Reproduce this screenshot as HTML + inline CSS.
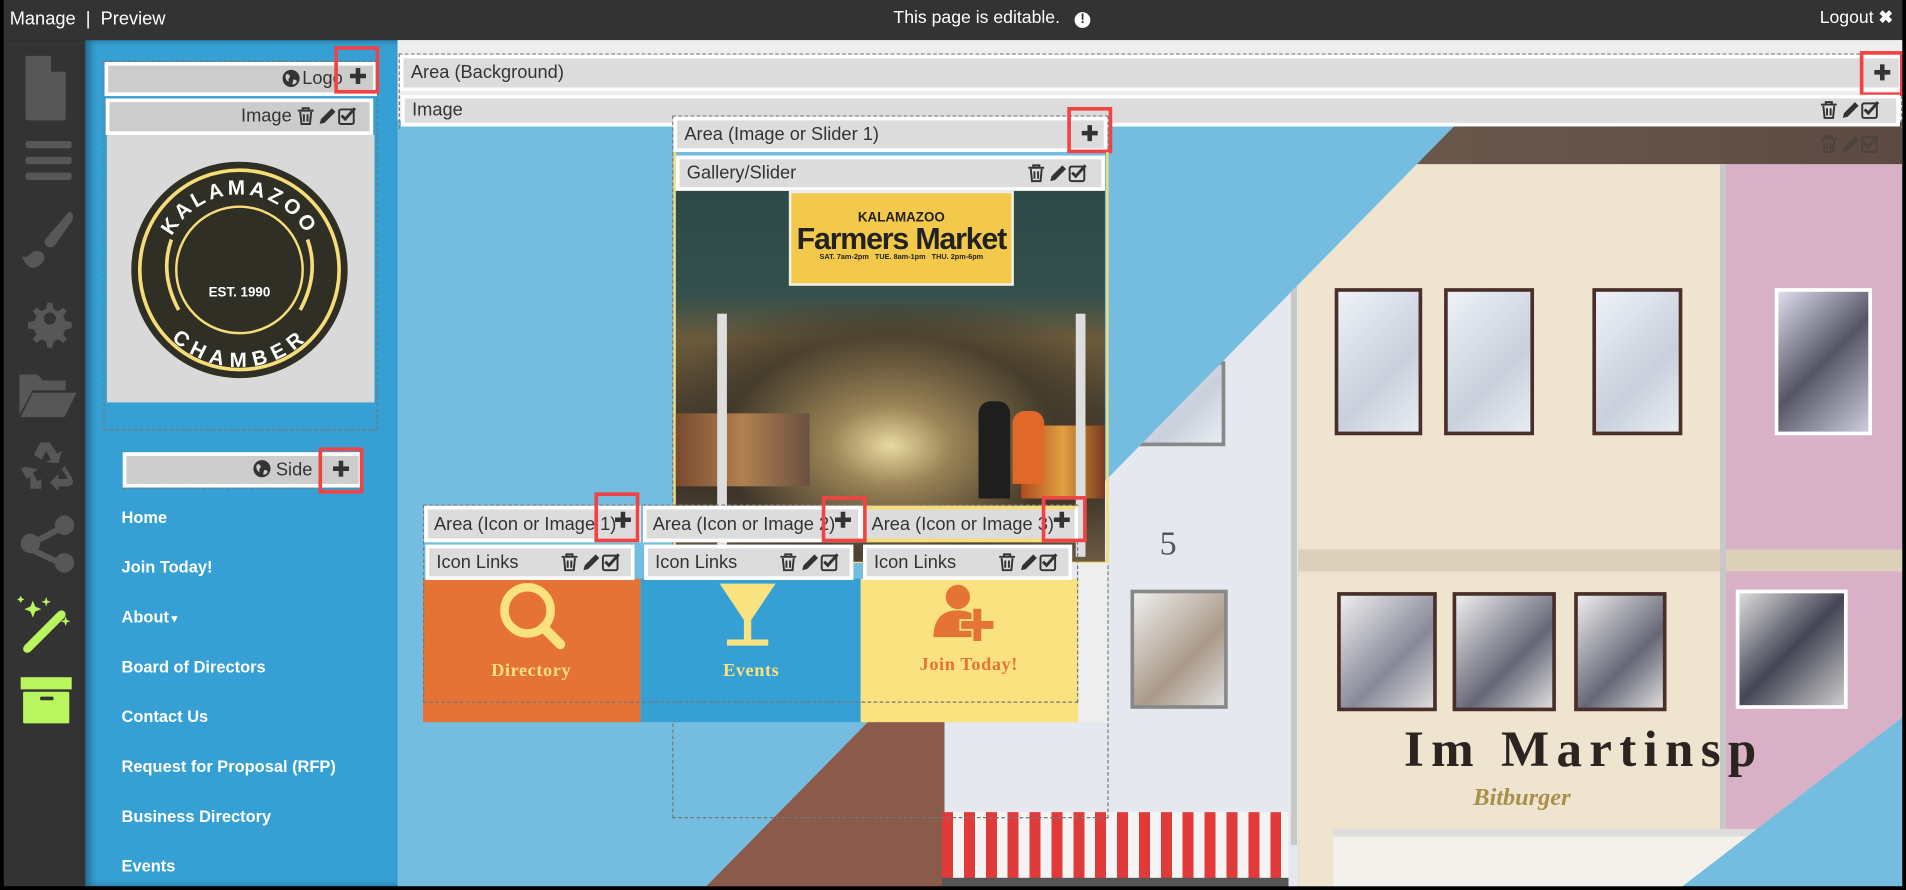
<!DOCTYPE html>
<html><head><meta charset="utf-8"><style>
*{margin:0;padding:0;box-sizing:border-box}
html,body{width:1906px;height:890px;overflow:hidden;background:#000}
#w{position:absolute;left:0;top:0;width:1568px;height:732px;transform:scale(1.21556,1.2158);transform-origin:0 0;font-family:"Liberation Sans",sans-serif;overflow:hidden;background:#000}
.a{position:absolute}
.hd{position:absolute;background:#dcdcdc;border:3px solid #fff;color:#333;font-size:15px;line-height:20px;padding:0 6px;white-space:nowrap}
.hd2{background:#ccc}
.red{position:absolute;border:3px solid #f04444}
.pl{position:absolute;width:15px;height:15px}
.tl{position:absolute;width:50px;height:17px}
.nav{position:absolute;left:100px;color:#fff;font-weight:bold;font-size:13.5px}
.dash{position:absolute;border:1px dashed #777}
.win{position:absolute;background:#4a2e2a;padding:3px}
.win i{display:block;width:100%;height:100%;background:linear-gradient(135deg,#eef2f8,#c9d0dc 60%,#e8ecf2);border:0}
</style></head><body><div id="w">
<svg width="0" height="0" style="position:absolute"><defs>
<symbol id="plus" viewBox="0 0 16 16"><path d="M6 1h4v5h5v4h-5v5H6v-5H1V6h5z" fill="#333"/></symbol>
<symbol id="tools" viewBox="0 0 50 17"><g fill="none" stroke="#333" stroke-width="1.6"><path d="M1 4h13M5 4V2h5v2M3 5l1 10h7l1-10M6 7v6M9 7v6"/><rect x="35" y="3" width="12" height="12" rx="1.5"/></g><path d="M19 15l1-4 9-9 3 3-9 9z" fill="#333"/><path d="M37 8l3 3 8-9" fill="none" stroke="#333" stroke-width="2.4"/></symbol>
<symbol id="globe" viewBox="0 0 16 16"><circle cx="8" cy="8" r="7.5" fill="#333"/><path d="M4 4q3 0 3 3q-2 1-1 4q-3-1-3-5zM10 9q3 0 3 2q-2 3-4 2z" fill="#ccc"/></symbol>
</defs></svg>
<div class="a" style="left:3px;top:0;width:1562px;height:33px;background:#333"></div>
<div class="a" style="left:8px;top:7px;color:#fff;font-size:15px">Manage &nbsp;| &nbsp;Preview</div>
<div class="a" style="left:735px;top:7px;color:#fff;font-size:14.5px">This page is editable. &nbsp;&nbsp;<b style="display:inline-block;width:13px;height:13px;border-radius:50%;background:#fff;color:#333;font-size:11px;line-height:13px;text-align:center">!</b></div>
<div class="a" style="left:1497px;top:7px;color:#fff;font-size:14.5px">Logout <b>✖</b></div>
<div class="a" style="left:3px;top:33px;width:67px;height:696px;background:#333"></div>
<svg class="a" style="left:3px;top:33px" width="67" height="696" fill="#575757">
<path d="M18 13h21l12 12v39q0 2-2 2H20q-2 0-2-2z"/><path d="M39 12v14h13" fill="#333"/>
<rect x="18" y="83" width="38" height="6" rx="2"/><rect x="18" y="96" width="38" height="6" rx="2"/><rect x="18" y="109" width="38" height="6" rx="2"/>
<path d="M54 141q5 2 2 8l-14 20q-3 3-7 0q-3-3 0-6z"/><path d="M15 178q4 1 7-2q4-5 10-1q4 5-2 10q-9 7-15-7z"/>
<path d="M36 216l4 0 1 5 4 2 4-3 3 3-3 4 2 4 5 1v5l-5 1-2 4 3 4-3 3-4-3-4 2-1 5h-4l-1-5-4-2-4 3-3-3 3-4-2-4-5-1v-5l5-1 2-4-3-4 3-3 4 3 4-2z"/><circle cx="38" cy="229" r="5" fill="#333"/>
<path d="M13 275h15l4 5h19v8H24l-11 20z"/><path d="M24 290h36l-10 20H14z"/>
<path d="M30 331l8 0 6 9 4-2-3 10-10-1 4-2-4-7-4 7-6-4zM14 352l5 9 3-2-0 10h9v-8l-3 2-4-7 4-3-10-2zM50 350l6 10q3 6-3 7h-8v4l-7-7 7-7v4h8l-5-8z"/>
<circle cx="50" cy="399" r="8"/><circle cx="22" cy="414" r="8"/><circle cx="50" cy="430" r="8"/><path d="M22 412l28-15 3 4-28 15zM22 416l28 13-3 4-28-13z"/>
</svg>
<svg class="a" style="left:3px;top:488px" width="67" height="120" fill="#b8f55f">
<path d="M17 43l28-28q3-2 5 0q2 2 0 5l-28 28q-3 2-5 0q-2-2 0-5z"/><path d="M24 6l2 5 5 2-5 2-2 5-2-5-5-2 5-2z"/><path d="M35 3l1 3 3 1-3 1-1 3-1-3-3-1 3-1z"/><path d="M51 19l1 3 3 1-3 1-1 3-1-3-3-1 3-1z"/><path d="M14 2l1 2 2 1-2 1-1 2-1-2-2-1 2-1z"/>
<rect x="14" y="69" width="42" height="10"/><rect x="16" y="81" width="38" height="26" rx="1"/><rect x="30" y="85" width="11" height="3" rx="1" fill="#333"/>
</svg>
<div class="a" style="left:70px;top:33px;width:257px;height:696px;background:#36a0d4;box-shadow:inset 4px 0 6px rgba(0,0,0,.35)"></div>
<div class="a" style="left:327px;top:33px;width:1238px;height:696px;background:#74bde0"></div>
<div class="a" style="left:327px;top:33px;width:1238px;height:66px;background:#eee"></div>
<div class="a" style="left:327px;top:97px;width:1238px;height:635px;clip-path:polygon(873px 3px,1238px 3px,1238px 493px,1053px 635px,251px 635px);overflow:hidden">
 <div class="a" style="left:0;top:0;width:741px;height:635px;background:#e6e8ef"></div>
 <div class="a" style="left:741px;top:0;width:352px;height:635px;background:#efe4d0"></div>
 <div class="a" style="left:1093px;top:0;width:145px;height:635px;background:#d8b1c7"></div>
 <div class="a" style="left:0;top:0;width:1238px;height:38px;background:linear-gradient(90deg,#7d8a92,#6d5a4e 60%,#5d4a42)"></div>
 <div class="a" style="left:741px;top:355px;width:500px;height:18px;background:#dcd0bb"></div>
 <div class="a" style="left:1088px;top:38px;width:5px;height:560px;background:#c8c8c8"></div>
 <div class="a" style="left:735px;top:38px;width:5px;height:560px;background:#c8c8c8"></div>
 <div class="win" style="left:771px;top:140px;width:72px;height:121px"><i></i></div>
 <div class="win" style="left:861px;top:140px;width:74px;height:121px"><i></i></div>
 <div class="win" style="left:983px;top:140px;width:74px;height:121px"><i></i></div>
 <div class="win" style="left:1133px;top:140px;width:80px;height:121px;background:#fff"><i style="background:linear-gradient(135deg,#dde,#556 50%,#ccd)"></i></div>
 <div class="win" style="left:603px;top:200px;width:78px;height:70px;background:#888"><i></i></div>
 <div class="win" style="left:773px;top:390px;width:82px;height:98px"><i style="background:linear-gradient(135deg,#eee,#889 60%,#ddd)"></i></div>
 <div class="win" style="left:868px;top:390px;width:85px;height:98px"><i style="background:linear-gradient(135deg,#eee,#667 60%,#ddd)"></i></div>
 <div class="win" style="left:968px;top:390px;width:76px;height:98px"><i style="background:linear-gradient(135deg,#eee,#667 60%,#ddd)"></i></div>
 <div class="win" style="left:1101px;top:388px;width:92px;height:98px;background:#fff"><i style="background:linear-gradient(135deg,#ddd,#445 50%,#ccc)"></i></div>
 <div class="win" style="left:603px;top:388px;width:80px;height:98px;background:#888"><i style="background:linear-gradient(135deg,#eee,#a98 60%,#ddd)"></i></div>
 <div class="a" style="left:627px;top:335px;font-size:28px;color:#555;font-family:'Liberation Serif',serif">5</div>
 <div class="a" style="left:828px;top:496px;font-size:42px;font-weight:bold;color:#2b2420;font-family:'Liberation Serif',serif;letter-spacing:6px;white-space:nowrap">Im Martinsp</div>
 <div class="a" style="left:885px;top:548px;font-size:20px;font-weight:bold;font-style:italic;color:#a8904a;font-family:'Liberation Serif',serif">Bitburger</div>
 <div class="a" style="left:250px;top:495px;width:200px;height:140px;background:#8a5a4a"></div>
 <div class="a" style="left:770px;top:585px;width:400px;height:50px;background:#f4f1ec;border-top:6px solid #ddd"></div>
 <div class="a" style="left:448px;top:571px;width:285px;height:58px;background:repeating-linear-gradient(90deg,#e03a3a 0 9px,#f4f4f4 9px 18px)"></div>
 <div class="a" style="left:448px;top:625px;width:285px;height:10px;background:#555"></div>
</div>
<div class="dash" style="left:328px;top:44px;width:1237px;height:62px;border-bottom:0"></div>
<div class="hd" style="left:329px;top:45px;width:1236px;height:30px;padding-top:2px">Area (Background)</div>
<div class="red" style="left:1530px;top:42px;width:36px;height:37px"></div>
<svg class="pl" style="left:1541px;top:52px"><use href="#plus"/></svg>
<div class="hd" style="left:330px;top:78px;width:1233px;height:26px;padding-top:0">Image</div>
<svg class="tl" style="left:1497px;top:82px"><use href="#tools"/></svg>
<svg class="tl" style="left:1497px;top:110px;opacity:.35"><use href="#tools"/></svg>
<div class="dash" style="left:85px;top:50px;width:226px;height:304px"></div>
<div class="hd hd2" style="left:86px;top:51px;width:224px;height:28px;text-align:right;padding:1px 25px 0 0">Logo</div>
<svg class="pl" style="left:232px;top:57px"><use href="#globe"/></svg>
<div class="red" style="left:275px;top:38px;width:37px;height:39px"></div>
<svg class="pl" style="left:287px;top:55px"><use href="#plus"/></svg>
<div class="hd hd2" style="left:87px;top:81px;width:220px;height:30px;text-align:right;padding:2px 64px 0 0">Image</div>
<svg class="tl" style="left:244px;top:87px"><use href="#tools"/></svg>
<div class="a" style="left:88px;top:111px;width:220px;height:220px;background:#d9d9d9"></div>
<svg class="a" style="left:107px;top:132px" width="180" height="180">
<circle cx="90" cy="90" r="89" fill="#2f2f25"/><circle cx="90" cy="90" r="82" fill="none" stroke="#f7dd78" stroke-width="3"/><circle cx="90" cy="90" r="52" fill="none" stroke="#f7dd78" stroke-width="2"/>
<defs><path id="tp" d="M28 90a62 62 0 0 1 124 0"/><path id="bp" d="M22 90a68 68 0 0 0 136 0"/></defs>
<text font-family="Liberation Sans" font-weight="bold" font-size="17" fill="#fff" letter-spacing="3"><textPath href="#tp" startOffset="50%" text-anchor="middle">KALAMAZOO</textPath></text>
<text font-family="Liberation Sans" font-weight="bold" font-size="17" fill="#fff" letter-spacing="3"><textPath href="#bp" startOffset="50%" text-anchor="middle" dominant-baseline="hanging">CHAMBER</textPath></text>
<text x="90" y="112" font-family="Liberation Sans" font-weight="bold" font-size="11" fill="#fff" text-anchor="middle">EST. 1990</text>
<path d="M34 65q-10 28 6 58M146 65q10 28-6 58" stroke="#f7dd78" stroke-width="3" fill="none"/>
</svg>
<div class="dash" style="left:101px;top:372px;width:198px;height:30px"></div>
<div class="hd hd2" style="left:101px;top:372px;width:197px;height:29px;text-align:right;padding:2px 38px 0 0">Side</div>
<svg class="pl" style="left:208px;top:378px"><use href="#globe"/></svg>
<div class="red" style="left:262px;top:368px;width:37px;height:38px"></div>
<svg class="pl" style="left:273px;top:378px"><use href="#plus"/></svg>
<div class="nav" style="top:418px">Home</div>
<div class="nav" style="top:459px">Join Today!</div>
<div class="nav" style="top:500px">About<span style="font-size:9px">▼</span></div>
<div class="nav" style="top:541px">Board of Directors</div>
<div class="nav" style="top:582px">Contact Us</div>
<div class="nav" style="top:623px">Request for Proposal (RFP)</div>
<div class="nav" style="top:664px">Business Directory</div>
<div class="nav" style="top:705px">Events</div>
<div class="dash" style="left:553px;top:95px;width:359px;height:578px"></div>
<div class="a" style="left:887px;top:462px;width:24px;height:132px;background:#eee"></div>
<div class="hd" style="left:554px;top:96px;width:357px;height:29px;padding-top:2px">Area (Image or Slider 1)</div>
<div class="red" style="left:878px;top:88px;width:37px;height:38px"></div>
<svg class="pl" style="left:889px;top:102px"><use href="#plus"/></svg>
<div class="a" style="left:554px;top:125px;width:358px;height:338px;border:2px solid #f7dd78;border-top:0"></div>
<div class="hd" style="left:556px;top:128px;width:353px;height:29px;padding-top:2px">Gallery/Slider</div>
<svg class="tl" style="left:845px;top:134px"><use href="#tools"/></svg>
<div class="a" style="left:556px;top:157px;width:353px;height:305px;background:linear-gradient(180deg,#2d4a48 0,#34504c 28%,#6b5a3a 40%,#4a4030 60%,#3e3528 80%,#6b5a44 100%)"></div>
<div class="a" style="left:556px;top:250px;width:353px;height:212px;background:radial-gradient(ellipse at 50% 55%,#e8d9a0 0,#9a8356 20%,rgba(60,52,40,.6) 55%,rgba(60,40,30,0) 80%)"></div>
<div class="a" style="left:556px;top:340px;width:110px;height:60px;background:linear-gradient(90deg,#7a4a30,#b08050 50%,#6a5040)"></div>
<div class="a" style="left:840px;top:350px;width:69px;height:60px;background:linear-gradient(90deg,#b04a20,#e0a040 50%,#7a3a20)"></div>
<div class="a" style="left:590px;top:258px;width:8px;height:200px;background:#ddd"></div>
<div class="a" style="left:885px;top:258px;width:8px;height:200px;background:#ddd"></div>
<div class="a" style="left:649px;top:157px;width:185px;height:78px;background:#f3c94b;text-align:center;color:#222;font-weight:bold;border:2px solid #eee">
 <div style="font-size:11px;margin-top:14px">KALAMAZOO</div><div style="font-size:25px;line-height:24px;letter-spacing:-1px">Farmers Market</div><div style="font-size:6px">SAT. 7am-2pm &nbsp; TUE. 8am-1pm &nbsp; THU. 2pm-6pm</div></div>
<div class="a" style="left:805px;top:330px;width:26px;height:80px;background:#1e1e1e;border-radius:10px 10px 0 0"></div>
<div class="a" style="left:833px;top:338px;width:26px;height:60px;background:#e0692a;border-radius:10px 10px 0 0"></div>
<div class="a" style="left:348px;top:476px;width:179px;height:118px;background:#e67336"></div>
<div class="a" style="left:527px;top:476px;width:181px;height:118px;background:#36a0d4"></div>
<div class="a" style="left:708px;top:476px;width:179px;height:118px;background:#f9e27f"></div>
<div class="dash" style="left:348px;top:415px;width:539px;height:163px"></div>
<div class="hd" style="left:349px;top:416px;width:178px;height:30px;padding:3px 0 0 5px">Area (Icon or Image 1)</div>
<div class="hd" style="left:529px;top:416px;width:180px;height:30px;padding:3px 0 0 5px">Area (Icon or Image 2)</div>
<div class="hd" style="left:709px;top:416px;width:178px;height:30px;padding:3px 0 0 5px;border-color:#f7dd78 #fff #f7dd78 #fff">Area (Icon or Image 3)</div>
<div class="red" style="left:489px;top:405px;width:37px;height:41px"></div><svg class="pl" style="left:505px;top:420px"><use href="#plus"/></svg>
<div class="red" style="left:676px;top:408px;width:37px;height:38px"></div><svg class="pl" style="left:686px;top:420px"><use href="#plus"/></svg>
<div class="red" style="left:857px;top:408px;width:37px;height:38px"></div><svg class="pl" style="left:866px;top:420px"><use href="#plus"/></svg>
<div class="hd" style="left:350px;top:448px;width:172px;height:29px;padding:2px 0 0 6px">Icon Links</div>
<div class="hd" style="left:530px;top:448px;width:172px;height:29px;padding:2px 0 0 6px">Icon Links</div>
<div class="hd" style="left:710px;top:448px;width:172px;height:29px;padding:2px 0 0 6px">Icon Links</div>
<svg class="tl" style="left:461px;top:454px"><use href="#tools"/></svg>
<svg class="tl" style="left:641px;top:454px"><use href="#tools"/></svg>
<svg class="tl" style="left:821px;top:454px"><use href="#tools"/></svg>
<svg class="a" style="left:348px;top:476px" width="540" height="118">
<circle cx="86" cy="26" r="19" fill="none" stroke="#f9e27f" stroke-width="7"/><path d="M99 40l14 14" stroke="#f9e27f" stroke-width="8" stroke-linecap="round"/>
<path d="M244 4h46l-20 30v16h14v5h-34v-5h14V34z" fill="#f9e27f"/>
<circle cx="440" cy="15" r="10" fill="#e67336"/><path d="M420 48q0-22 20-22q10 0 16 6v16z" fill="#e67336"/><path d="M452 24h8v10h10v8h-10v10h-8v-10h-10v-8h10z" fill="#e67336" stroke="#f9e27f" stroke-width="1.5"/>
<text x="89" y="80" text-anchor="middle" font-family="Liberation Serif" font-weight="bold" font-size="15" fill="#f9e27f" letter-spacing=".5">Directory</text>
<text x="270" y="80" text-anchor="middle" font-family="Liberation Serif" font-weight="bold" font-size="15" fill="#f9e27f" letter-spacing=".5">Events</text>
<text x="449" y="75" text-anchor="middle" font-family="Liberation Serif" font-weight="bold" font-size="15" fill="#e67336" letter-spacing=".5">Join Today!</text>
</svg>
<div class="a" style="left:1565px;top:0;width:3px;height:732px;background:#000"></div>
<div class="a" style="left:0;top:729px;width:1568px;height:3px;background:#000"></div>
<div class="a" style="left:0;top:0;width:3px;height:732px;background:#000"></div>
</div></body></html>
